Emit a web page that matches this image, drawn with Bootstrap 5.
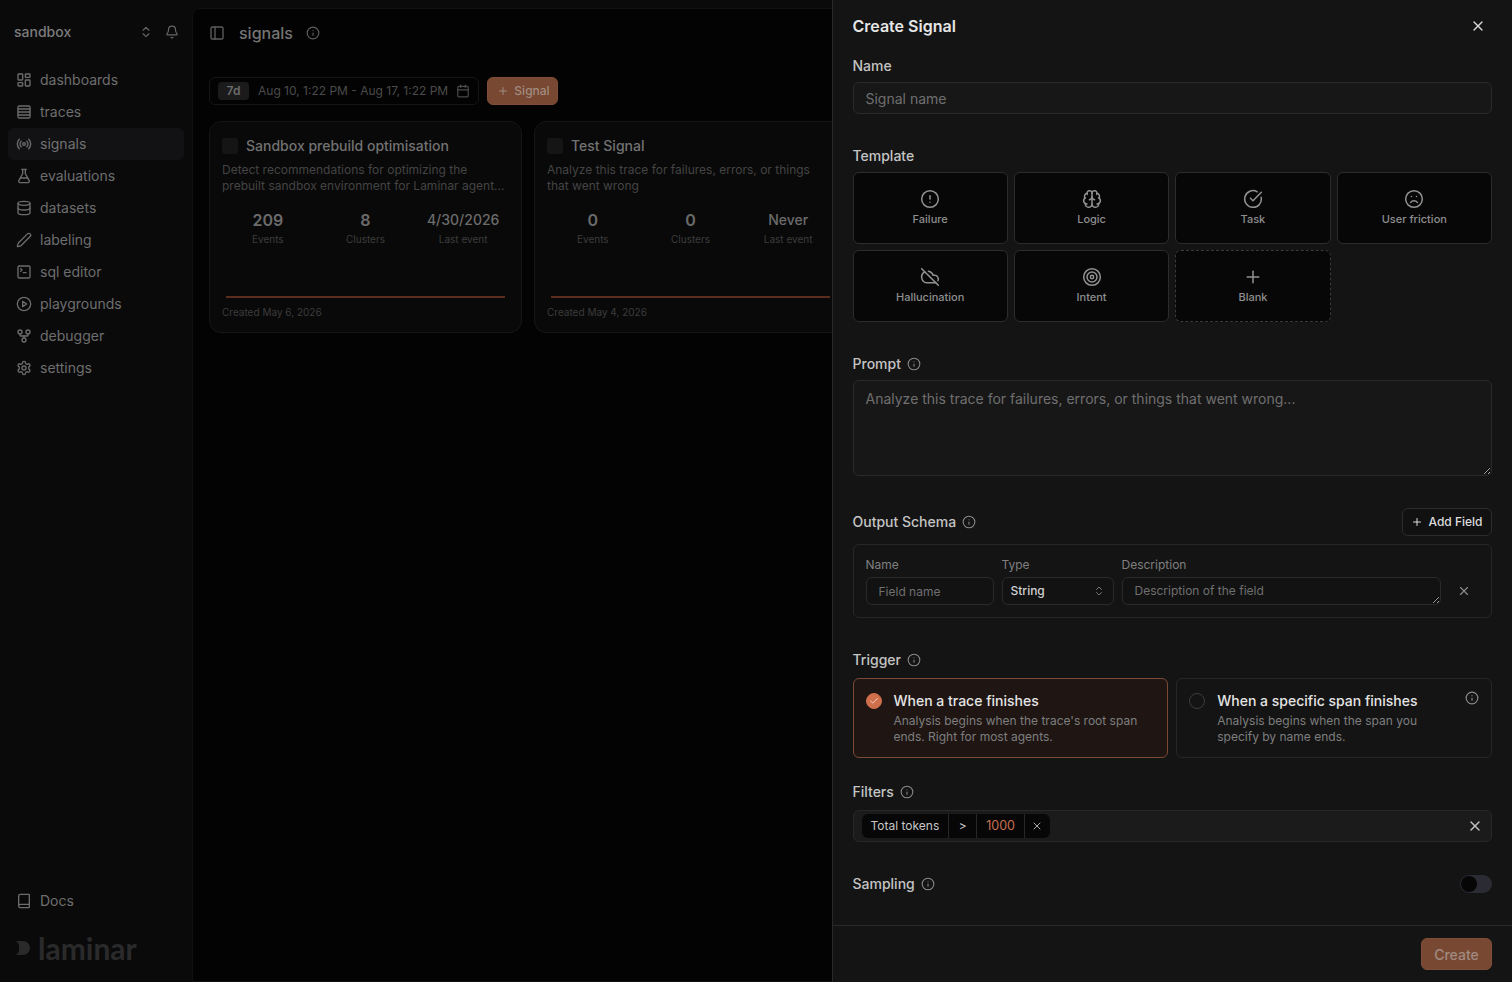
<!DOCTYPE html>
<html lang="en">
<head>
  <meta charset="UTF-8">
  <title>signals - Create Signal</title>
  <meta name="viewport" content="width=device-width, initial-scale=1">
  <link href="https://cdn.jsdelivr.net/npm/bootstrap@5.3.3/dist/css/bootstrap.min.css" rel="stylesheet">
  <style>
    html, body { height: 100%; }
    body {
      font-family: Inter, "Liberation Sans", sans-serif;
      background: #0a0a0b;
      color: #777;
      font-size: 14px;
      line-height: 20px;
      overflow: hidden;
      position: relative;
    }
    .ico { width: 16px; height: 16px; fill: none; stroke: currentColor; stroke-width: 2; stroke-linecap: round; stroke-linejoin: round; flex: none; }
    .ico-20 { width: 20px; height: 20px; stroke-width: 1.8; }
    .ico-14 { width: 14px; height: 14px; }
    .ico-12 { width: 12px; height: 12px; }
    .ico-10 { width: 10px; height: 10px; }

    /* sidebar */
    .side { width: 192px; flex: none; }
    .side-head { height: 64px; padding: 0 13px 0 14px; color: #7c7c7c; font-weight: 500; gap: 12px; }
    .side-head .ico { color: #666; width: 14px; height: 14px; }
    .side-nav { padding: 0 8px; }
    .side-link { height: 32px; padding: 0 8px; gap: 8px; border-radius: 6px; color: #6e6e6e; }
    .side-link .ico { color: #6c6c6c; }
    .side-link.active { background: #121214; color: #717171; }
    .logo { padding: 0 16px 4px; height: 65px; color: #2a2a2b; font: 700 30px/30px Lato, sans-serif; gap: 7px; }
    .logo svg { width: 15px; height: 16px; fill: currentColor; flex: none; }

    /* main */
    .main { background: #030303; margin-top: 8px; border: 1px solid #101011; border-radius: 8px 0 0 0; overflow: hidden; }
    .main-head { height: 48px; padding: 0 16px; gap: 14px; color: #757575; font-size: 16px; font-weight: 500; }
    .main-head .ico { color: #5e5e5e; }
    .main-head .ico-14 { margin-left: -1px; }
    .toolbar { padding: 20px 16px 16px; gap: 8px; }
    .date-box { height: 28px; width: 270px; border: 1px solid #151516; border-radius: 6px; padding: 0 8px; color: #4b4b4b; font-size: 12px; }
    .date-chip { width: 31px; height: 18px; background: #1b1b1c; border-radius: 4px; color: #6c6c6c; font-weight: 600; margin-right: 9px; }
    .btn-signal { height: 28px; width: 71px; padding: 0 0 0 2px; font-size: 12px; font-weight: 500; gap: 5px; background: #784832; color: #a08b80; border: 1px solid #7f4e38; border-radius: 6px; }
    .btn-signal:hover { background: #784832; color: #a08b80; border-color: #7f4e38; }
    .sig-cards { gap: 12px; padding: 0 16px; }
    .sig-card { width: 313px; height: 212px; flex: none; background: #090909; border: 1px solid #161617; border-radius: 12px; padding: 15px 12px 12px; }
    .sig-check { width: 16px; height: 16px; background: #151515; border-radius: 3px; flex: none; }
    .sig-title { color: #727272; font-weight: 500; line-height: 18px; }
    .sig-desc { color: #444; font-size: 12px; line-height: 16px; margin-top: 7px; height: 32px; }
    .sig-stats { margin: 16px -3px 0; }
    .stat-val { color: #6b6b6b; font-size: 16px; font-weight: 600; line-height: 20px; }
    .stat-val.light { font-size: 14px; font-weight: 500; }
    .stat-lbl { color: #3d3d3d; font-size: 10px; line-height: 12px; margin-top: 3px; }
    .sig-line { height: 2px; background: #5c2c1e; margin: 51px 4px 0; }
    .sig-created { color: #3c3c3c; font-size: 10px; line-height: 12px; margin-top: 8px; }

    /* sheet over the page */
    .sheet { position: absolute; top: 0; right: 0; bottom: 0; width: 680px; background: #141414; border-left: 1px solid #28282a; }
    .sheet-head { height: 56px; padding: 14px 20px 0 19.5px; }
    .sheet-title { color: #e6e6e6; font-size: 16px; font-weight: 600; line-height: 24px; }
    .sheet-x { color: #d8d8d8; margin: 4px 6px 0 0; }
    .sheet-body { padding: 0 20px 0 19.5px; }
    .f-label { color: #c4c4c4; font-size: 14px; font-weight: 500; line-height: 20px; gap: 6px; }
    .f-label .ico { color: #8a8a8a; width: 14px; height: 14px; stroke-width: 1.8; }
    .f-gap { margin-top: 32px; }
    .f-ctl, .f-ctl:focus { background: #171718; border: 1px solid #2a2a2c; color: #ccc; box-shadow: none; border-radius: 6px; font-size: 14px; line-height: 20px; padding: 0 12px; }
    .f-ctl::placeholder { color: #6f6f6f; opacity: 1; }
    .f-input { height: 32px; margin-top: 6px; }
    .f-area { height: 96px; margin-top: 6px; padding: 8px 12px; resize: vertical; }

    .tpl-grid { display: grid; grid-template-columns: repeat(4, 1fr); grid-auto-rows: 72px; gap: 6px; margin-top: 6px; }
    .tpl { background: #070708; border: 1px solid #2c2c2e; border-radius: 6px; color: #8e8e8e; font-size: 11px; font-weight: 500; line-height: 16px; gap: 2px; }
    .tpl .ico { color: #929292; }
    .tpl.dashed { border-style: dashed; border-color: #3a3a3c; }

    .btn-add { height: 28px; width: 90px; padding: 0; gap: 5px; background: #111112; border: 1px solid #2c2c2e; color: #dcdcdc; font-size: 12px; font-weight: 500; border-radius: 6px; }
    .btn-add:hover { background: #111112; color: #dcdcdc; border-color: #2c2c2e; }
    .schema { height: 74px; margin-top: 8px; border: 1px solid #272729; border-radius: 6px; padding: 12px; gap: 8px; }
    .schema-lbl { color: #7f7f7f; font-size: 12px; line-height: 16px; margin-bottom: 4px; }
    .schema .f-ctl { height: 28px; font-size: 12px; line-height: 16px; background: #121213; min-height: 0; }
    .col-name { width: 128px; flex: none; }
    .col-type { width: 112px; flex: none; }
    .type-box { height: 28px; background: #121213; border: 1px solid #2a2a2c; border-radius: 6px; padding: 0 8px; color: #d0d0d0; font-size: 12px; font-weight: 500; line-height: 16px; }
    .type-box .ico { color: #777; }
    .schema textarea.f-ctl { padding: 5px 12px; resize: vertical; display: block; }
    .schema-x { width: 30px; height: 28px; margin-top: 20px; color: #8a8a8a; flex: none; }

    .trig-row { gap: 8px; margin-top: 8px; }
    .trig { height: 80px; border: 1px solid #272729; border-radius: 6px; padding: 14px 12px; gap: 12px; position: relative; }
    .trig.on { background: #1f1614; border-color: #7a4a35; }
    .radio { width: 16px; height: 16px; border-radius: 50%; border: 1px solid #3c3c3e; flex: none; color: #f4e4dc; }
    .radio.on { background: #cf6f4c; border-color: #cf6f4c; }
    .trig-title { color: #e4e4e4; font-weight: 500; line-height: 16px; }
    .trig-desc { color: #7e7e7e; font-size: 12px; line-height: 16px; margin-top: 4px; }
    .trig-info { position: absolute; top: 12px; right: 12px; color: #8a8a8a; }

    .filter-box { height: 32px; margin-top: 8px; background: #1b1b1c; border: 1px solid #28282a; border-radius: 6px; padding: 0 8px 0 8px; }
    .pill { height: 24px; background: #070708; border-radius: 6px; font-size: 12px; color: #c6c6c6; overflow: hidden; }
    .pill span { padding: 0 9px; line-height: 24px; border-right: 1px solid #28282a; }
    .pill .op { padding: 0 9.5px; }
    .pill .val { color: #c8714f; font-size: 12.5px; }
    .pill .end { padding: 0 6.5px; border: 0; color: #aaa; display: flex; align-items: center; }
    .filter-x { color: #c4c4c4; }

    .switch-off { width: 32px; height: 18px; background: #2b2b33; border-radius: 9px; padding: 1px; }
    .switch-off i { display: block; width: 16px; height: 16px; background: #060607; border-radius: 50%; }
    .sheet-foot { height: 57px; border-top: 1px solid #2a2a2c; padding: 12px 20px; }
    .btn-create { width: 71px; height: 32px; padding: 0; font-size: 14px; font-weight: 500; background: #784832; color: #a08b80; border: 1px solid #7f4e38; border-radius: 6px; }
    .btn-create:hover { background: #784832; color: #a08b80; border-color: #7f4e38; }
  </style>
</head>
<body>
  <svg width="0" height="0" class="position-absolute">
    <symbol id="i-dash" viewBox="0 0 24 24"><rect x="3" y="3" width="7" height="9" rx="1"/><rect x="14" y="3" width="7" height="5" rx="1"/><rect x="14" y="12" width="7" height="9" rx="1"/><rect x="3" y="16" width="7" height="5" rx="1"/></symbol>
    <symbol id="i-rows" viewBox="0 0 24 24"><rect x="3" y="3" width="18" height="18" rx="2"/><path d="M3 7.500h18M3 12h18M3 16.500h18"/></symbol>
    <symbol id="i-radio" viewBox="0 0 24 24"><circle cx="12" cy="12" r="2"/><path d="M16.24 7.76a6 6 0 0 1 0 8.49"/><path d="M4.93 19.07a10 10 0 0 1 0-14.14"/><path d="M7.76 16.24a6 6 0 0 1 0-8.49"/><path d="M19.07 4.93a10 10 0 0 1 0 14.14"/></symbol>
    <symbol id="i-flask" viewBox="0 0 24 24"><path d="M14 2v6a2 2 0 0 0 .245.96l5.51 10.08A2 2 0 0 1 18 22H6a2 2 0 0 1-1.755-2.96l5.51-10.08A2 2 0 0 0 10 8V2"/><path d="M6.453 15h11.094"/><path d="M8.500 2h7"/></symbol>
    <symbol id="i-db" viewBox="0 0 24 24"><ellipse cx="12" cy="5" rx="9" ry="3"/><path d="M3 5V19A9 3 0 0 0 21 19V5"/><path d="M3 12A9 3 0 0 0 21 12"/></symbol>
    <symbol id="i-pen" viewBox="0 0 24 24"><path d="M21.174 6.812a1 1 0 0 0-3.986-3.987L3.842 16.174a2 2 0 0 0-.5.83l-1.321 4.352a.5.5 0 0 0 .623.622l4.353-1.32a2 2 0 0 0 .83-.497z"/></symbol>
    <symbol id="i-term" viewBox="0 0 24 24"><path d="m7 11 2-2-2-2"/><path d="M11 13h4"/><rect x="3" y="3" width="18" height="18" rx="2"/></symbol>
    <symbol id="i-play" viewBox="0 0 24 24"><circle cx="12" cy="12" r="10"/><polygon points="10 8 16 12 10 16 10 8"/></symbol>
    <symbol id="i-fork" viewBox="0 0 24 24"><circle cx="12" cy="18" r="3"/><circle cx="6" cy="6" r="3"/><circle cx="18" cy="6" r="3"/><path d="M18 9v2c0 .6-.4 1-1 1H7c-.6 0-1-.4-1-1V9"/><path d="M12 12v3"/></symbol>
    <symbol id="i-gear" viewBox="0 0 24 24"><path d="M12.22 2h-.44a2 2 0 0 0-2 2v.18a2 2 0 0 1-1 1.73l-.43.25a2 2 0 0 1-2 0l-.15-.08a2 2 0 0 0-2.73.73l-.22.38a2 2 0 0 0 .73 2.73l.15.1a2 2 0 0 1 1 1.72v.51a2 2 0 0 1-1 1.74l-.15.09a2 2 0 0 0-.73 2.73l.22.38a2 2 0 0 0 2.73.73l.15-.08a2 2 0 0 1 2 0l.43.25a2 2 0 0 1 1 1.73V20a2 2 0 0 0 2 2h.44a2 2 0 0 0 2-2v-.18a2 2 0 0 1 1-1.73l.43-.25a2 2 0 0 1 2 0l.15.08a2 2 0 0 0 2.73-.73l.22-.39a2 2 0 0 0-.73-2.73l-.15-.08a2 2 0 0 1-1-1.74v-.5a2 2 0 0 1 1-1.74l.15-.09a2 2 0 0 0 .73-2.73l-.22-.38a2 2 0 0 0-2.73-.73l-.15.08a2 2 0 0 1-2 0l-.43-.25a2 2 0 0 1-1-1.73V4a2 2 0 0 0-2-2z"/><circle cx="12" cy="12" r="3"/></symbol>
    <symbol id="i-updown" viewBox="0 0 24 24"><path d="m7 15 5 5 5-5"/><path d="m7 9 5-5 5 5"/></symbol>
    <symbol id="i-bell" viewBox="0 0 24 24"><path d="M10.268 21a2 2 0 0 0 3.464 0"/><path d="M3.262 15.326A1 1 0 0 0 4 17h16a1 1 0 0 0 .74-1.673C19.41 13.956 18 12.499 18 8A6 6 0 0 0 6 8c0 4.499-1.411 5.956-2.738 7.326"/></symbol>
    <symbol id="i-panel" viewBox="0 0 24 24"><rect x="3" y="3" width="18" height="18" rx="2"/><path d="M9 3v18"/></symbol>
    <symbol id="i-info" viewBox="0 0 24 24"><circle cx="12" cy="12" r="10"/><path d="M12 16v-4"/><path d="M12 8h.01"/></symbol>
    <symbol id="i-cal" viewBox="0 0 24 24"><path d="M8 2v4"/><path d="M16 2v4"/><rect x="3" y="4" width="18" height="18" rx="2"/><path d="M3 10h18"/></symbol>
    <symbol id="i-plus" viewBox="0 0 24 24"><path d="M5 12h14"/><path d="M12 5v14"/></symbol>
    <symbol id="i-x" viewBox="0 0 24 24"><path d="M18 6 6 18"/><path d="m6 6 12 12"/></symbol>
    <symbol id="i-alert" viewBox="0 0 24 24"><circle cx="12" cy="12" r="10"/><path d="M12 8v4"/><path d="M12 16h.01"/></symbol>
    <symbol id="i-brain" viewBox="0 0 24 24"><path d="M12 18V5"/><path d="M15 13a4.170 4.170 0 0 1-3-4 4.170 4.170 0 0 1-3 4"/><path d="M17.598 6.500A3 3 0 1 0 12 5a3 3 0 1 0-5.598 1.500"/><path d="M17.997 5.125a4 4 0 0 1 2.526 5.77"/><path d="M18 18a4 4 0 0 0 2-7.464"/><path d="M19.967 17.483A4 4 0 1 1 12 18a4 4 0 1 1-7.967-.517"/><path d="M6 18a4 4 0 0 1-2-7.464"/><path d="M6.003 5.125a4 4 0 0 0-2.526 5.77"/></symbol>
    <symbol id="i-task" viewBox="0 0 24 24"><path d="M21.801 10A10 10 0 1 1 17 3.335"/><path d="m9 11 3 3L22 4"/></symbol>
    <symbol id="i-frown" viewBox="0 0 24 24"><circle cx="12" cy="12" r="10"/><path d="M16 16s-1.500-2-4-2-4 2-4 2"/><path d="M9 9h.01"/><path d="M15 9h.01"/></symbol>
    <symbol id="i-cloudoff" viewBox="0 0 24 24"><path d="m2 2 20 20"/><path d="M5.782 5.782A7 7 0 0 0 9 19h8.500a4.500 4.500 0 0 0 1.307-.193"/><path d="M21.532 16.500A4.500 4.500 0 0 0 17.500 10h-1.790A7.008 7.008 0 0 0 10 5.07"/></symbol>
    <symbol id="i-target" viewBox="0 0 24 24"><circle cx="12" cy="12" r="10"/><circle cx="12" cy="12" r="6"/><circle cx="12" cy="12" r="2"/></symbol>
    <symbol id="i-book" viewBox="0 0 24 24"><path d="M4 19.500v-15A2.500 2.500 0 0 1 6.500 2H19a1 1 0 0 1 1 1v18a1 1 0 0 1-1 1H6.500a1 1 0 0 1 0-5H20"/></symbol>
    <symbol id="i-check" viewBox="0 0 24 24"><path d="M20 6 9 17l-5-5"/></symbol>
  </svg>

  <div class="d-flex h-100">
    <aside class="side d-flex flex-column">
      <div class="side-head d-flex align-items-center">
        <span class="flex-grow-1">sandbox</span>
        <svg class="ico"><use href="#i-updown"/></svg>
        <svg class="ico"><use href="#i-bell"/></svg>
      </div>
      <nav class="side-nav d-flex flex-column">
        <a class="side-link d-flex align-items-center text-decoration-none"><svg class="ico"><use href="#i-dash"/></svg>dashboards</a>
        <a class="side-link d-flex align-items-center text-decoration-none"><svg class="ico"><use href="#i-rows"/></svg>traces</a>
        <a class="side-link active d-flex align-items-center text-decoration-none"><svg class="ico"><use href="#i-radio"/></svg>signals</a>
        <a class="side-link d-flex align-items-center text-decoration-none"><svg class="ico"><use href="#i-flask"/></svg>evaluations</a>
        <a class="side-link d-flex align-items-center text-decoration-none"><svg class="ico"><use href="#i-db"/></svg>datasets</a>
        <a class="side-link d-flex align-items-center text-decoration-none"><svg class="ico"><use href="#i-pen"/></svg>labeling</a>
        <a class="side-link d-flex align-items-center text-decoration-none"><svg class="ico"><use href="#i-term"/></svg>sql editor</a>
        <a class="side-link d-flex align-items-center text-decoration-none"><svg class="ico"><use href="#i-play"/></svg>playgrounds</a>
        <a class="side-link d-flex align-items-center text-decoration-none"><svg class="ico"><use href="#i-fork"/></svg>debugger</a>
        <a class="side-link d-flex align-items-center text-decoration-none"><svg class="ico"><use href="#i-gear"/></svg>settings</a>
      </nav>
      <div class="side-nav mt-auto">
        <a class="side-link d-flex align-items-center text-decoration-none"><svg class="ico"><use href="#i-book"/></svg>Docs</a>
      </div>
      <div class="logo d-flex align-items-center">
        <svg viewBox="0 0 15 16"><path d="M0 1h7a7 7 0 0 1 0 14H0a7 7 0 0 0 3-7A7 7 0 0 0 0 1z"/></svg>
        <span>laminar</span>
      </div>
    </aside>

    <main class="main flex-grow-1">
      <div class="main-head d-flex align-items-center">
        <svg class="ico"><use href="#i-panel"/></svg>
        <span>signals</span>
        <svg class="ico ico-14"><use href="#i-info"/></svg>
      </div>
      <div class="toolbar d-flex align-items-center">
        <div class="date-box d-flex align-items-center">
          <span class="date-chip d-flex align-items-center justify-content-center">7d</span>
          <span class="flex-grow-1">Aug 10, 1:22 PM - Aug 17, 1:22 PM</span>
          <svg class="ico ico-14"><use href="#i-cal"/></svg>
        </div>
        <button class="btn btn-signal d-flex align-items-center justify-content-center"><svg class="ico ico-12"><use href="#i-plus"/></svg>Signal</button>
      </div>
      <div class="sig-cards d-flex">
        <div class="sig-card">
          <div class="d-flex align-items-center gap-2"><span class="sig-check"></span><span class="sig-title">Sandbox prebuild optimisation</span></div>
          <div class="sig-desc">Detect recommendations for optimizing the prebuilt sandbox environment for Laminar agent...</div>
          <div class="sig-stats row g-0 text-center">
            <div class="col-4"><div class="stat-val">209</div><div class="stat-lbl">Events</div></div>
            <div class="col-4"><div class="stat-val">8</div><div class="stat-lbl">Clusters</div></div>
            <div class="col-4"><div class="stat-val light">4/30/2026</div><div class="stat-lbl">Last event</div></div>
          </div>
          <div class="sig-line"></div>
          <div class="sig-created">Created May 6, 2026</div>
        </div>
        <div class="sig-card">
          <div class="d-flex align-items-center gap-2"><span class="sig-check"></span><span class="sig-title">Test Signal</span></div>
          <div class="sig-desc">Analyze this trace for failures, errors, or things that went wrong</div>
          <div class="sig-stats row g-0 text-center">
            <div class="col-4"><div class="stat-val">0</div><div class="stat-lbl">Events</div></div>
            <div class="col-4"><div class="stat-val">0</div><div class="stat-lbl">Clusters</div></div>
            <div class="col-4"><div class="stat-val light">Never</div><div class="stat-lbl">Last event</div></div>
          </div>
          <div class="sig-line"></div>
          <div class="sig-created">Created May 4, 2026</div>
        </div>
      </div>
    </main>
  </div>

  <section class="sheet d-flex flex-column">
    <div class="sheet-head d-flex justify-content-between">
      <div class="sheet-title">Create Signal</div>
      <svg class="ico sheet-x"><use href="#i-x"/></svg>
    </div>
    <div class="sheet-body flex-grow-1">
      <label class="f-label d-flex">Name</label>
      <input class="form-control f-ctl f-input" placeholder="Signal name">

      <div class="f-label d-flex f-gap">Template</div>
      <div class="tpl-grid">
        <div class="tpl d-flex flex-column align-items-center justify-content-center"><svg class="ico ico-20"><use href="#i-alert"/></svg>Failure</div>
        <div class="tpl d-flex flex-column align-items-center justify-content-center"><svg class="ico ico-20"><use href="#i-brain"/></svg>Logic</div>
        <div class="tpl d-flex flex-column align-items-center justify-content-center"><svg class="ico ico-20"><use href="#i-task"/></svg>Task</div>
        <div class="tpl d-flex flex-column align-items-center justify-content-center"><svg class="ico ico-20"><use href="#i-frown"/></svg>User friction</div>
        <div class="tpl d-flex flex-column align-items-center justify-content-center"><svg class="ico ico-20"><use href="#i-cloudoff"/></svg>Hallucination</div>
        <div class="tpl d-flex flex-column align-items-center justify-content-center"><svg class="ico ico-20"><use href="#i-target"/></svg>Intent</div>
        <div class="tpl dashed d-flex flex-column align-items-center justify-content-center"><svg class="ico ico-20"><use href="#i-plus"/></svg>Blank</div>
      </div>

      <div class="f-label d-flex align-items-center f-gap">Prompt <svg class="ico"><use href="#i-info"/></svg></div>
      <textarea class="form-control f-ctl f-area" placeholder="Analyze this trace for failures, errors, or things that went wrong..."></textarea>

      <div class="d-flex align-items-center justify-content-between f-gap">
        <div class="f-label d-flex align-items-center">Output Schema <svg class="ico"><use href="#i-info"/></svg></div>
        <button class="btn btn-add d-flex align-items-center justify-content-center"><svg class="ico ico-12"><use href="#i-plus"/></svg>Add Field</button>
      </div>
      <div class="schema d-flex">
        <div class="col-name">
          <div class="schema-lbl">Name</div>
          <input class="form-control f-ctl" placeholder="Field name">
        </div>
        <div class="col-type">
          <div class="schema-lbl">Type</div>
          <div class="type-box d-flex align-items-center justify-content-between">String <svg class="ico ico-12"><use href="#i-updown"/></svg></div>
        </div>
        <div class="flex-grow-1">
          <div class="schema-lbl">Description</div>
          <textarea class="form-control f-ctl" rows="1" placeholder="Description of the field"></textarea>
        </div>
        <div class="schema-x d-flex align-items-center justify-content-center"><svg class="ico ico-14"><use href="#i-x"/></svg></div>
      </div>

      <div class="f-label d-flex align-items-center f-gap">Trigger <svg class="ico"><use href="#i-info"/></svg></div>
      <div class="trig-row row g-0 flex-nowrap">
        <div class="trig on col d-flex">
          <span class="radio on d-flex align-items-center justify-content-center"><svg class="ico ico-10"><use href="#i-check"/></svg></span>
          <div><div class="trig-title">When a trace finishes</div><div class="trig-desc">Analysis begins when the trace's root span<br>ends. Right for most agents.</div></div>
        </div>
        <div class="trig col d-flex">
          <span class="radio"></span>
          <div><div class="trig-title">When a specific span finishes</div><div class="trig-desc">Analysis begins when the span you<br>specify by name ends.</div></div>
          <svg class="ico ico-14 trig-info"><use href="#i-info"/></svg>
        </div>
      </div>

      <div class="f-label d-flex align-items-center mt-4">Filters <svg class="ico"><use href="#i-info"/></svg></div>
      <div class="filter-box d-flex align-items-center justify-content-between">
        <div class="pill d-flex align-items-center">
          <span>Total tokens</span><span class="op">&gt;</span><span class="val">1000</span><span class="end"><svg class="ico ico-12"><use href="#i-x"/></svg></span>
        </div>
        <svg class="ico filter-x"><use href="#i-x"/></svg>
      </div>

      <div class="d-flex align-items-center justify-content-between f-gap">
        <div class="f-label d-flex align-items-center">Sampling <svg class="ico"><use href="#i-info"/></svg></div>
        <div class="switch-off"><i></i></div>
      </div>
    </div>
    <div class="sheet-foot d-flex justify-content-end">
      <button class="btn btn-create">Create</button>
    </div>
  </section>

  <script src="https://cdn.jsdelivr.net/npm/bootstrap@5.3.3/dist/js/bootstrap.bundle.min.js"></script>
</body>
</html>
